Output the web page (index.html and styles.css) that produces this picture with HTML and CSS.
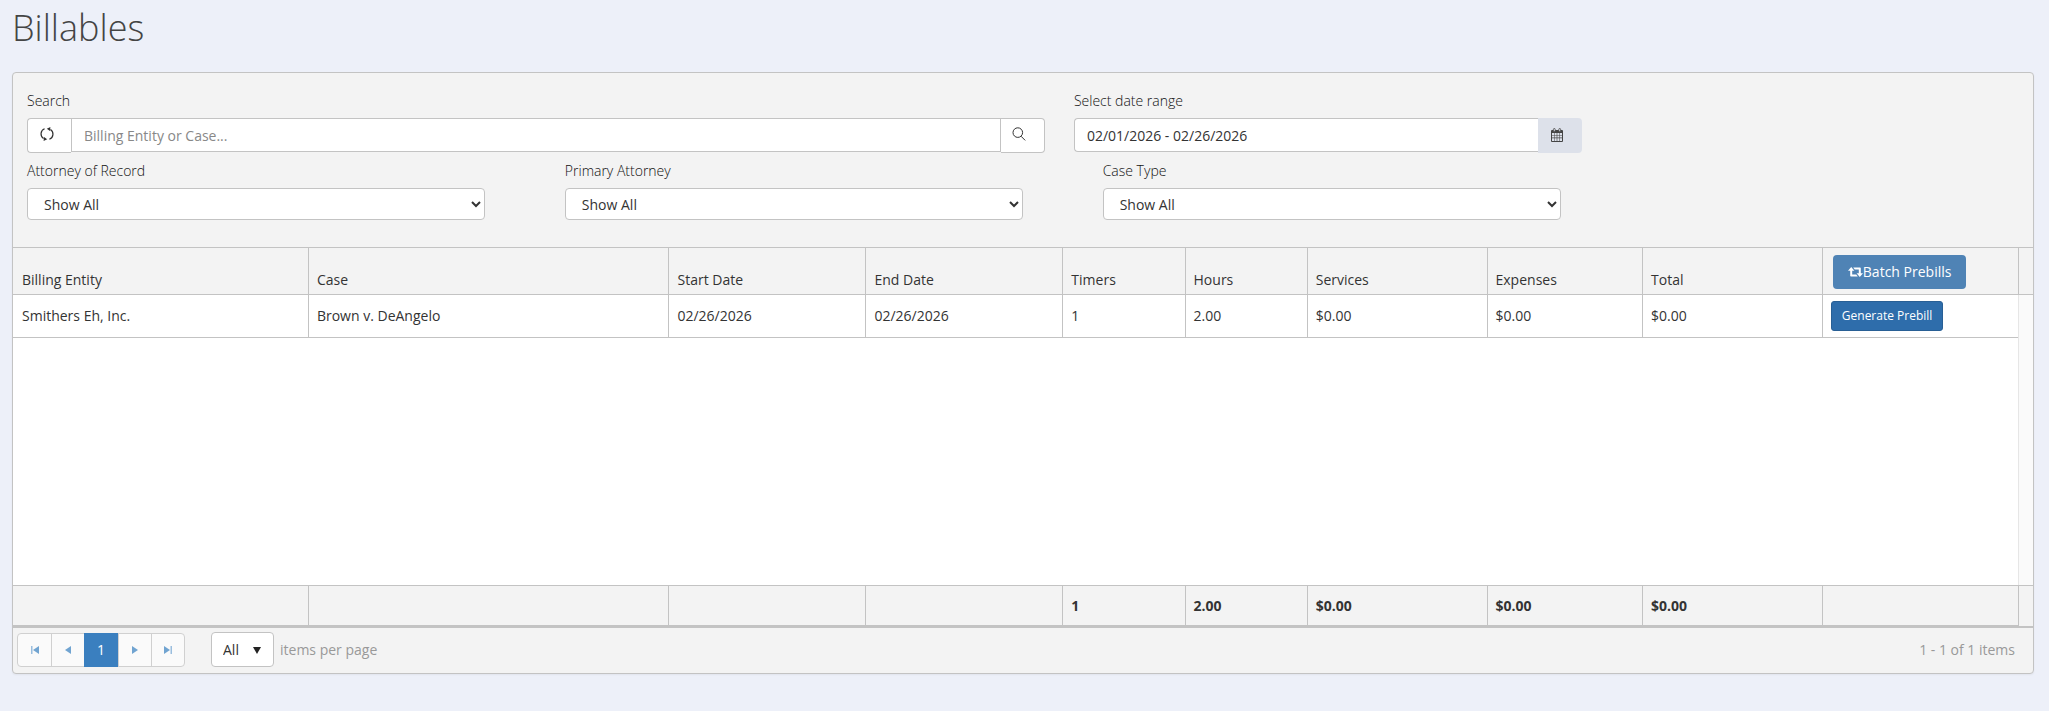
FILE: index.html
```html
<!DOCTYPE html>
<html lang="en">
<head>
  <meta charset="UTF-8">
  <meta name="viewport" content="width=device-width, initial-scale=1.0">
  <title>Billables</title>
  <link rel="stylesheet" href="styles.css">
</head>
<body>
  <h1 class="page-title">Billables</h1>

  <main class="grid">
    <form class="toolbar">
      <div class="toolbar-row">
        <div class="field search-field">
          <label for="search">Search</label>
          <div class="input-group">
            <button type="button" class="addon addon-left" aria-label="Refresh">
              <svg width="14" height="14" viewBox="0 0 14 14" fill="none" stroke="#333" stroke-width="1.2">
                <path d="M4.600 1.800A5.500 5.500 0 0 0 3.600 11.600M9.400 12.200A5.500 5.500 0 0 0 10.400 2.400"/>
                <path fill="#333" stroke="none" d="M6.800 1.800L10.400 0L10 3.900zM7.200 12.200L3.600 14L4 10.100z"/>
              </svg>
            </button>
            <input type="text" id="search" class="input" placeholder="Billing Entity or Case...">
            <button type="submit" class="addon addon-right" aria-label="Search">
              <svg width="14" height="14" viewBox="0 0 14 14" fill="none" stroke="#333">
                <circle cx="5.8" cy="5.6" r="4.8"/>
                <path d="M9 9.2L13.2 13.4"/>
              </svg>
            </button>
          </div>
        </div>
        <div class="field date-field">
          <label for="range">Select date range</label>
          <div class="input-group">
            <input type="text" id="range" class="input input-date" value="02/01/2026 - 02/26/2026">
            <button type="button" class="addon addon-date" aria-label="Open calendar">
              <svg width="12" height="14" viewBox="0 0 12 14">
                <path fill="#444" fill-rule="evenodd" d="M1 2h10a1 1 0 0 1 1 1v10a1 1 0 0 1-1 1H1a1 1 0 0 1-1-1V3a1 1 0 0 1 1-1zM1 5v2h2V5zM3.5 5v2h2.2V5zM6.3 5v2h2.2V5zM9 5v2h2V5zM1 7.6v2h2v-2zM3.5 7.6v2h2.2v-2zM6.3 7.6v2h2.2v-2zM9 7.6v2h2v-2zM1 10.2v2.8h2v-2.8zM3.5 10.2v2.8h2.2v-2.8zM6.3 10.2v2.8h2.2v-2.8zM9 10.2v2.8h2v-2.8z"/>
                <rect x="2.4" y="0.5" width="1.8" height="3.2" rx="0.9" fill="#dde1ea" stroke="#444" stroke-width="0.8"/>
                <rect x="7.8" y="0.5" width="1.8" height="3.2" rx="0.9" fill="#dde1ea" stroke="#444" stroke-width="0.8"/>
              </svg>
            </button>
          </div>
        </div>
      </div>
      <div class="toolbar-row filters">
        <div class="field">
          <label for="attorney">Attorney of Record</label>
          <select id="attorney" class="select"><option>Show All</option></select>
        </div>
        <div class="field">
          <label for="primary">Primary Attorney</label>
          <select id="primary" class="select"><option>Show All</option></select>
        </div>
        <div class="field">
          <label for="case-type">Case Type</label>
          <select id="case-type" class="select"><option>Show All</option></select>
        </div>
      </div>
    </form>

    <div class="table-wrap">
      <table class="table">
        <colgroup>
          <col class="col-entity"><col class="col-case"><col class="col-date"><col class="col-date">
          <col class="col-count"><col class="col-count"><col class="col-money"><col class="col-expenses">
          <col class="col-money"><col><col class="col-scroll">
        </colgroup>
        <thead>
          <tr>
            <th>Billing Entity</th>
            <th>Case</th>
            <th>Start Date</th>
            <th>End Date</th>
            <th>Timers</th>
            <th>Hours</th>
            <th>Services</th>
            <th>Expenses</th>
            <th>Total</th>
            <th class="batch-cell">
              <button type="button" class="btn btn-batch">
                <svg width="15" height="10" viewBox="0 0 15 10" fill="#fff">
                  <path d="M3.200 0L6.400 3.800H4.200V7.500H8.200L9.800 9.500H3Q2.200 9.500 2.200 8.700V3.800H0z"/>
                  <path d="M11.800 10L8.600 6.200H10.800V2.500H6.800L5.200 0.500H12Q12.800 0.500 12.800 1.300V6.200H15z"/>
                </svg>Batch Prebills
              </button>
            </th>
            <th></th>
          </tr>
        </thead>
        <tbody>
          <tr>
            <td>Smithers Eh, Inc.</td>
            <td>Brown v. DeAngelo</td>
            <td>02/26/2026</td>
            <td>02/26/2026</td>
            <td>1</td>
            <td>2.00</td>
            <td>$0.00</td>
            <td>$0.00</td>
            <td>$0.00</td>
            <td><button type="button" class="btn btn-generate">Generate Prebill</button></td>
            <td class="scroll-track" rowspan="2"></td>
          </tr>
          <tr class="empty-space">
            <td colspan="10"></td>
          </tr>
        </tbody>
        <tfoot>
          <tr>
            <td></td>
            <td></td>
            <td></td>
            <td></td>
            <td>1</td>
            <td>2.00</td>
            <td>$0.00</td>
            <td>$0.00</td>
            <td>$0.00</td>
            <td></td>
            <td class="scroll-foot"></td>
          </tr>
        </tfoot>
      </table>
    </div>

    <div class="pager">
      <nav class="pages" aria-label="Pages">
        <a href="#" aria-label="First page"><svg width="8" height="8" viewBox="0 0 8 8" fill="#71a4d1"><path opacity=".7" d="M0 0h1.5v8H0z"/><path d="M8 0v8L2 4z"/></svg></a>
        <a href="#" aria-label="Previous page"><svg width="8" height="8" viewBox="0 0 8 8" fill="#71a4d1"><path d="M7 0v8L1 4z"/></svg></a>
        <a href="#" class="current">1</a>
        <a href="#" aria-label="Next page"><svg width="8" height="8" viewBox="0 0 8 8" fill="#71a4d1"><path d="M1 0v8l6-4z"/></svg></a>
        <a href="#" aria-label="Last page"><svg width="8" height="8" viewBox="0 0 8 8" fill="#71a4d1"><path d="M0 0v8l6-4z"/><path opacity=".7" d="M6.5 0H8v8H6.5z"/></svg></a>
      </nav>
      <div class="page-size">
        <select id="page-size"><option>All</option></select>
        <svg class="caret" width="8" height="7" viewBox="0 0 8 7" fill="#222"><path d="M0 0h8L4 7z"/></svg>
      </div>
      <label for="page-size">items per page</label>
      <span class="pager-info">1 - 1 of 1 items</span>
    </div>
  </main>
</body>
</html>
```
FILE: styles.css
```css
* {
  box-sizing: border-box;
}

body {
  margin: 0;
  padding: 0 15px 36px 12px;
  background: #edf0f9;
  color: #333;
  font-family: "Open Sans", sans-serif;
  font-size: 14px;
  line-height: 20px;
}

button,
input,
select {
  font: inherit;
  color: inherit;
}

.page-title {
  margin: 0 0 18px;
  padding-top: 2px;
  color: #444;
  font-size: 36px;
  font-weight: 300;
  line-height: 52px;
}

.grid {
  background: #f3f3f3;
  border: 1px solid #c3c3c3;
  border-radius: 4px;
  box-shadow: 0 1px 2px rgba(0, 0, 0, 0.05);
}

/* filters */
.toolbar {
  padding: 18px 14px 27px;
}

.toolbar-row {
  display: flex;
  gap: 29px;
}

.filters {
  margin-top: 8px;
  gap: 4%;
}

.field label {
  display: block;
  margin-bottom: 7px;
  color: #111;
  font-weight: 300;
}

.search-field {
  width: 51.1%;
}

.date-field {
  width: 25.5%;
}

.filters .field {
  width: 23%;
}

.input-group {
  display: flex;
  align-items: flex-start;
}

.input {
  flex: 1;
  min-width: 0;
  height: 34px;
  padding: 6px 12px;
  background: #fff;
  border: 1px solid #c3c3c3;
  border-radius: 0;
}

.input::placeholder {
  color: #888;
}

.input-date {
  border-right: 0;
  border-radius: 4px 0 0 4px;
}

.addon {
  display: flex;
  justify-content: center;
  width: 44px;
  height: 35px;
  padding: 8px 6px 0 0;
  background: #fff;
  border: 1px solid #c3c3c3;
}

.addon-left {
  border-right: 0;
  border-radius: 4px 0 0 4px;
}

.addon-right {
  border-left: 0;
  border-radius: 0 4px 4px 0;
}

.addon-date {
  padding: 10px 6px 0 0;
  background: #dde1ea;
  border: 0;
  border-radius: 0 4px 4px 0;
}

.select {
  display: block;
  width: 100%;
  height: 32px;
  padding: 1px 0 0 12px;
  background: #fff;
  border: 1px solid #c3c3c3;
  border-radius: 4px;
}

/* table */
.table {
  width: 100%;
  table-layout: fixed;
  border-collapse: separate;
  border-spacing: 0;
}

.col-entity { width: 14.6%; }
.col-case { width: 17.85%; }
.col-date { width: 9.75%; }
.col-count { width: 6.05%; }
.col-money { width: 8.9%; }
.col-expenses { width: 7.7%; }
.col-scroll { width: 15px; }

.table th,
.table td {
  padding: 0 8px;
  border-left: 1px solid #c3c3c3;
  font-weight: 400;
  text-align: left;
}

.table tr > :first-child {
  padding-left: 9px;
  border-left: 0;
}

.table th {
  height: 48px;
  padding-bottom: 4px;
  border-top: 1px solid #c3c3c3;
  border-bottom: 1px solid #c3c3c3;
  vertical-align: bottom;
}

.table tbody td {
  height: 43px;
  background: #fff;
  border-bottom: 1px solid #c3c3c3;
}

.table .empty-space td {
  height: 247px;
  border-bottom: 0;
}

.table tbody .scroll-track {
  padding: 0;
  background: #fafafa;
  border-left-color: #e6e6e6;
  border-bottom: 0;
}

.table tfoot td {
  height: 41px;
  border-top: 1px solid #c3c3c3;
  border-bottom: 1px solid #c3c3c3;
  font-weight: 700;
}

.table tfoot .scroll-foot {
  border-bottom: 0;
}

.table th.batch-cell {
  padding: 2px 10px 0;
  vertical-align: middle;
}

.btn {
  color: #fff;
  cursor: pointer;
  white-space: nowrap;
}

.btn-batch {
  display: flex;
  align-items: center;
  height: 34px;
  padding: 0 15px;
  background: #4f83b5;
  border: 0;
  border-radius: 4px;
}

.btn-generate {
  display: block;
  height: 30px;
  padding: 0 10px;
  background: #2e6dab;
  border: 1px solid #285f95;
  border-radius: 3px;
  font-size: 12px;
}

/* pager */
.pager {
  display: flex;
  align-items: center;
  height: 47px;
  padding: 0 18px 2px 4px;
  border-top: 2px solid #c3c3c3;
  color: #999;
}

.pages {
  display: flex;
  height: 34px;
  border: 1px solid #d0d0d0;
  border-radius: 4px;
  background: #fafafa;
}

.pages a {
  display: flex;
  align-items: center;
  justify-content: center;
  width: 33px;
  border-left: 1px solid #d0d0d0;
  text-decoration: none;
}

.pages a:first-child {
  border-left: 0;
}

.pages .current {
  width: 34px;
  margin: -1px 0;
  background: #3a7fbf;
  border-left: 0;
  color: #fff;
}

.page-size {
  position: relative;
  margin: 0 6px 0 26px;
}

.page-size select {
  appearance: none;
  display: block;
  width: 63px;
  height: 35px;
  padding: 0 11px;
  background: #fff;
  border: 1px solid #c3c3c3;
  border-radius: 4px;
  color: #333;
}

.page-size .caret {
  position: absolute;
  top: 15px;
  right: 13px;
  pointer-events: none;
}

.pager-info {
  margin-left: auto;
}
```
